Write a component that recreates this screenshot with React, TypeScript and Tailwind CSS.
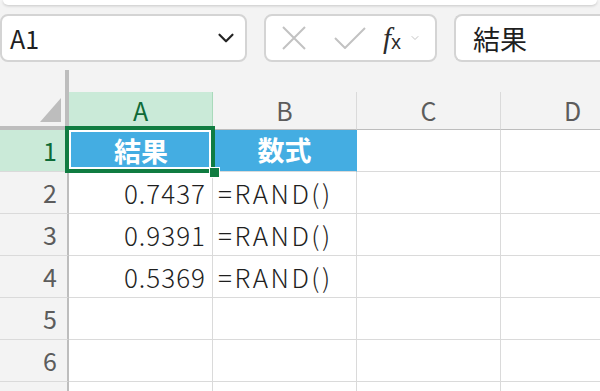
import { ChevronDown } from 'lucide-react'

const FONT = "font-['Noto_Sans_CJK_JP','Noto_Sans',sans-serif]"

const ROWS = [
  { n: '2', a: '0.7437', b: '=RAND()' },
  { n: '3', a: '0.9391', b: '=RAND()' },
  { n: '4', a: '0.5369', b: '=RAND()' },
  { n: '5', a: '', b: '' },
  { n: '6', a: '', b: '' },
  { n: '', a: '', b: '' },
]

export default function App() {
  return (
    <div className={`relative h-[391px] w-[600px] overflow-hidden bg-[#f3f3f3] ${FONT}`}>
      <div className="mx-[3px] h-[5px] rounded-b-[8px] bg-white shadow-[0_1px_3px_rgba(0,0,0,0.18)]" />

      {/* formula bar */}
      <div className="mt-[9px] flex h-[48px] items-stretch">
        <div className="flex w-[247px] items-center justify-between rounded-[8px] border-2 border-[#d4d4d4] bg-white pl-[8px] pr-[6px]">
          <span className="text-[25px] leading-none text-[#1f1f1f]">A1</span>
          <ChevronDown size={26} strokeWidth={2} className="text-[#242424]" />
        </div>

        <div className="ml-[17px] flex w-[173px] items-center rounded-[8px] border-2 border-[#d4d4d4] bg-white">
          <svg width="26" height="26" viewBox="0 0 26 26" className="ml-[15px]">
            <path d="M2 2 L24 24 M24 2 L2 24" stroke="#c2c2c2" strokeWidth="2" fill="none" />
          </svg>
          <svg width="34" height="22" viewBox="0 0 34 22" className="ml-[26px]">
            <path d="M2 11 L12 21 L32 1" stroke="#c2c2c2" strokeWidth="2" fill="none" />
          </svg>
          <span className="ml-[16px] flex items-end leading-none text-[#2b2b2b]">
            <span className="font-['Liberation_Serif',serif] text-[29px] italic">f</span>
            <span className="mb-[1px] font-['Noto_Sans',sans-serif] text-[19px]">x</span>
          </span>
          <ChevronDown size={12} strokeWidth={1.5} className="ml-[8px] text-[#b0b0b0]" />
        </div>

        <div className="ml-[17px] flex flex-1 items-center rounded-l-[8px] border-2 border-r-0 border-[#d4d4d4] bg-white pl-[17px]">
          <span className="text-[27px] leading-none text-[#1f1f1f]">結果</span>
        </div>
      </div>

      {/* sheet */}
      <div className="relative mt-[8px] grid grid-cols-[69px_144px_144px_144px_144px] grid-rows-[22px_38px_repeat(7,42px)]">
        <div className="relative row-span-2 border-r-4 border-b-4 border-[#bdbdbd] bg-[#f3f3f3]">
          <svg width="21" height="24" viewBox="0 0 21 24" className="absolute right-[4px] bottom-[4px]">
            <polygon points="21,0 21,24 0,24" fill="#bdbdbd" />
          </svg>
        </div>
        <div />
        <div />
        <div />
        <div />

        <div className="flex items-center justify-center border-r border-b border-r-[#a9dabb] border-b-[#bdbdbd] bg-[#caead8] text-[25px] text-[#0e6b37]">
          A
        </div>
        {['B', 'C', 'D'].map((letter) => (
          <div
            key={letter}
            className="flex items-center justify-center border-r border-b border-r-[#dadada] border-b-[#bdbdbd] text-[25px] text-[#5c5c5c]"
          >
            {letter}
          </div>
        ))}

        {/* row 1 */}
        <div className="flex items-center justify-end border-r-2 border-b border-r-[#bdbdbd] border-b-[#dadada] bg-[#caead8] pr-[10px] text-[25px] text-[#0e6b37]">
          1
        </div>
        <div className="flex items-center justify-center bg-[#44ade2] text-[27px] font-bold text-white">結果</div>
        <div className="flex items-center justify-center border-r border-b border-r-[#44ade2] border-b-[#dadada] bg-[#44ade2] text-[27px] font-bold text-white">
          数式
        </div>
        <div className="border-r border-b border-[#dadada] bg-white" />
        <div className="border-b border-[#dadada] bg-white" />

        {ROWS.map((row, index) => (
          <SheetRow key={index} {...row} />
        ))}

        {/* selection */}
        <div className="absolute top-[56px] left-[65px] h-[47px] w-[150px] border-4 border-[#107c41] shadow-[inset_0_0_0_2px_white]">
          <div className="absolute -right-[9px] -bottom-[9px] h-[11px] w-[11px] border border-white bg-[#107c41]" />
        </div>
      </div>
    </div>
  )
}

function SheetRow({ n, a, b }: any) {
  return (
    <>
      <div className="flex items-center justify-end border-r-2 border-b border-r-[#bdbdbd] border-b-[#dadada] bg-[#f3f3f3] pr-[10px] text-[25px] text-[#5c5c5c]">
        {n}
      </div>
      <div className="flex items-center justify-end border-r border-b border-[#dadada] bg-white pr-[6px] text-[26px] font-light tracking-[1px] text-[#1f1f1f]">
        {a}
      </div>
      <div className="flex items-center border-r border-b border-[#dadada] bg-white pl-[5px] text-[26px] font-light tracking-[2.5px] text-[#1f1f1f]">
        {b}
      </div>
      <div className="border-r border-b border-[#dadada] bg-white" />
      <div className="border-b border-[#dadada] bg-white" />
    </>
  )
}
